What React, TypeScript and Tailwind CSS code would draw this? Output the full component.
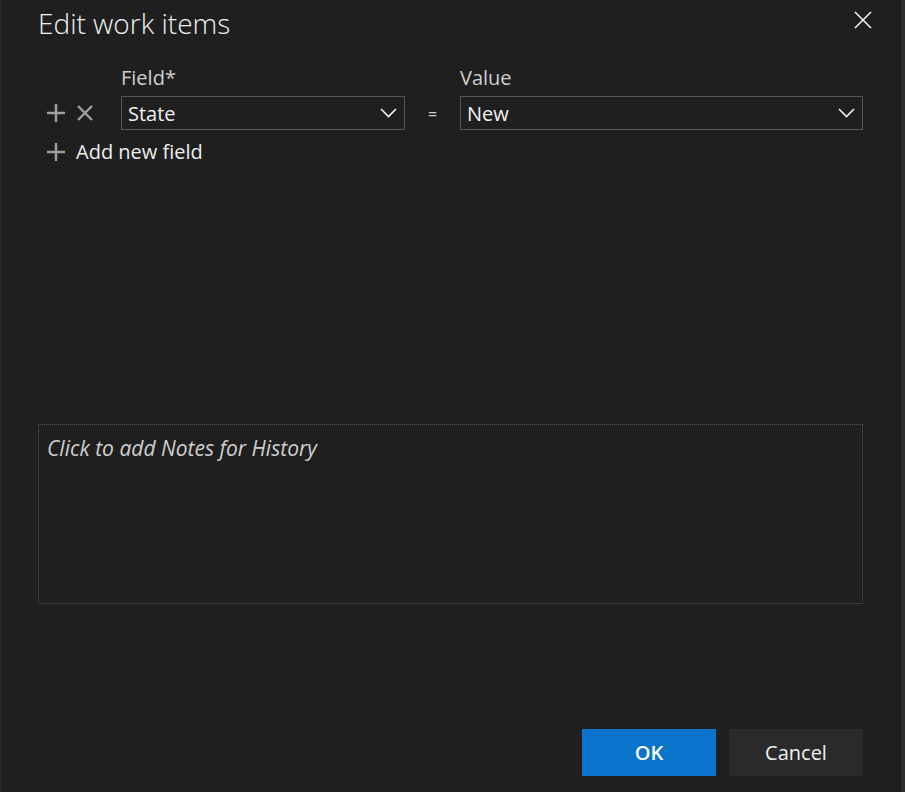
const font = { fontFamily: '"Open Sans", "Noto Sans", sans-serif' };

function PlusIcon() {
  return (
    <svg width="18" height="18" viewBox="0 0 18 18" className="text-[#a0a0a0]">
      <path d="M9 0v18M0 9h18" stroke="currentColor" strokeWidth="2.4" />
    </svg>
  );
}

function CrossIcon({ size, stroke }: { size: number; stroke: number }) {
  return (
    <svg width={size} height={size} viewBox={`0 0 ${size} ${size}`}>
      <path d={`M1 1L${size - 1} ${size - 1}M${size - 1} 1L1 ${size - 1}`} stroke="currentColor" strokeWidth={stroke} />
    </svg>
  );
}

function Chevron() {
  return (
    <svg width="17" height="10" viewBox="0 0 17 10" className="text-[#f2f2f2]">
      <path d="M1 1l7.5 7.5L16 1" fill="none" stroke="currentColor" strokeWidth="1.6" />
    </svg>
  );
}

function SelectBox({ value }: { value: string }) {
  return (
    <div className="flex h-[34px] items-center justify-between border border-[#555555] pl-[6px] pr-[7px]">
      <span className="pt-[2px] text-[20px] leading-none text-[#f2f2f2]">{value}</span>
      <Chevron />
    </div>
  );
}

export default function App() {
  return (
    <div className="flex h-[792px] w-[905px] bg-[#1f1f1f]" style={font}>
      <div className="w-px bg-[#2c2c2c]" />
      <div className="flex flex-1 flex-col pl-[37px] pr-[38px]">
        <div className="mt-[5px] flex items-start justify-between">
          <h1 className="text-[28px] font-light leading-[36px] text-[#f0f0f0]">Edit work items</h1>
          <button className="mr-[-9px] mt-[6px] text-[#f0f0f0]">
            <CrossIcon size={18} stroke={1.6} />
          </button>
        </div>

        <div className="mt-[24px] grid grid-cols-[83px_284px_55px_1fr] items-center gap-y-[5px]">
          <div />
          <div className="text-[20px] leading-[26px] text-[#cfcfcf]">Field*</div>
          <div />
          <div className="text-[20px] leading-[26px] text-[#cfcfcf]">Value</div>

          <div className="flex items-center gap-[12px] pl-[9px] text-[#a0a0a0]">
            <PlusIcon />
            <CrossIcon size={16} stroke={2.4} />
          </div>
          <SelectBox value="State" />
          <div className="pt-[2px] text-center text-[16px] text-[#cfcfcf]">=</div>
          <SelectBox value="New" />
        </div>

        <button className="mt-[9px] flex items-center gap-[11px] pl-[9px] text-left">
          <PlusIcon />
          <span className="text-[20px] leading-[26px] text-[#eeeeee]">Add new field</span>
        </button>

        <div className="mt-[259px] h-[180px] border border-dotted border-[#555555] px-[8px] pt-[10px]">
          <span className="text-[21px] italic leading-[26px] text-[#cfcfcf]">Click to add Notes for History</span>
        </div>

        <div className="flex-1" />

        <div className="mb-[16px] flex justify-end gap-[13px]">
          <button className="h-[47px] w-[134px] bg-[#0a74cc] text-[20px] font-semibold text-white">OK</button>
          <button className="h-[47px] w-[134px] border border-[#2c2c2c] bg-[#2a2a2a] text-[20px] text-[#f0f0f0]">
            Cancel
          </button>
        </div>
      </div>
      <div className="w-[4px] bg-[#2e2e2e]" />
    </div>
  );
}
